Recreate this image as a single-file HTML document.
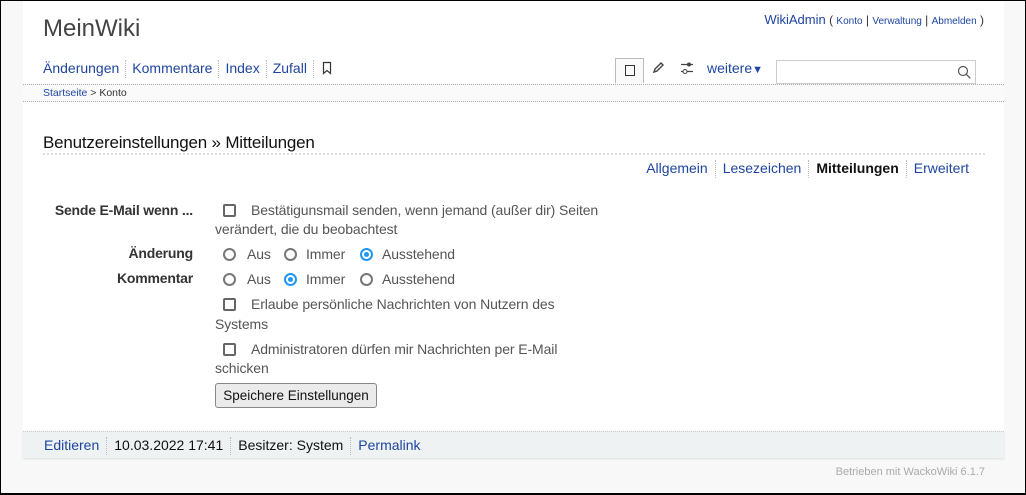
<!DOCTYPE html>
<html><head><meta charset="utf-8"><style>
*{margin:0;padding:0;box-sizing:border-box}
html,body{width:1026px;height:495px;overflow:hidden}
body{background:#f8f8f8;font-family:"Liberation Sans",sans-serif;position:relative;font-size:14px;color:#333}
.frame{position:absolute;left:0;top:0;width:1026px;height:495px;border:1px solid #000;border-bottom-width:2px;z-index:10;pointer-events:none}
.a{position:absolute;white-space:nowrap}
.b{color:#1e45a0}
.panel{position:absolute;left:23px;top:0;width:981px;height:431px;background:#fff}
.sep{display:inline-block;border-left:1px dotted #bbb;height:18px;vertical-align:middle;margin:0 6px}
.cb{position:absolute;width:13px;height:13px;border:2px solid #666;border-radius:2px}
.rd{position:absolute;width:13px;height:13px;border:2px solid #777;border-radius:50%}
.rd.on{border-color:#2196f3}
.rd.on::after{content:"";position:absolute;left:2px;top:2px;width:5px;height:5px;border-radius:50%;background:#2196f3}
.lbl{position:absolute;right:833px;font-weight:bold;color:#333;white-space:nowrap;letter-spacing:-0.2px}
.t{position:absolute;color:#555;white-space:nowrap;letter-spacing:-0.1px}
.n{font-size:14px}
.f .sep{margin:0 7px}
</style></head><body>
<div class="panel"></div>
<div class="a" style="left:43px;top:15px;font-size:24px;color:#444">MeinWiki</div>
<div class="a" style="right:42px;top:12px;font-size:12px;color:#333"><span class="b" style="font-size:13px">WikiAdmin</span> ( <span class="b" style="font-size:10px">Konto</span> | <span class="b" style="font-size:10px">Verwaltung</span> | <span class="b" style="font-size:10px">Abmelden</span> )</div>
<div class="a b n" style="left:43px;top:60px">Änderungen<span class="sep"></span>Kommentare<span class="sep"></span>Index<span class="sep"></span>Zufall<span class="sep"></span></div>
<svg class="a" style="left:322px;top:61px" width="10" height="14"><path d="M1.5 1.5h7v11l-3.5-3-3.5 3z" fill="none" stroke="#333" stroke-width="1.2"/></svg>
<div class="a" style="left:615px;top:58px;width:29px;height:25px;border:1px solid #bbb;border-bottom:none;background:#fafafa"></div>
<div class="a" style="left:625px;top:65px;width:10px;height:11px;border:1.5px solid #333"></div>
<svg class="a" style="left:651px;top:61px" width="14" height="14"><path d="M3 11l1-3 6-6 2 2-6 6z" fill="none" stroke="#444" stroke-width="1.4"/></svg>
<svg class="a" style="left:680px;top:61px" width="14" height="14"><path d="M1 3.5h12M1 10.5h12" stroke="#444" stroke-width="1.2"/><circle cx="9" cy="3.5" r="2" fill="#444"/><circle cx="5" cy="10.5" r="2" fill="#fff" stroke="#444"/></svg>
<div class="a b n" style="left:707px;top:60px">weitere<span style="font-size:11px">▼</span></div>
<div class="a" style="left:776px;top:60px;width:200px;height:24px;border:1px solid #ccc;background:#fff"></div>
<svg class="a" style="left:957px;top:65px" width="14" height="14"><circle cx="6" cy="6" r="4.5" fill="none" stroke="#555" stroke-width="1.2"/><path d="M9.3 9.3l4 4" stroke="#555" stroke-width="1.3"/></svg>
<div class="a" style="left:23px;top:84px;width:981px;height:18px;background:#fafafa;border-top:1px dotted #aaa;border-bottom:1px dotted #aaa"></div>
<div class="a" style="left:43px;top:87px;font-size:10.5px;color:#333"><span class="b">Startseite</span> &gt; Konto</div>
<div class="a" style="left:43px;top:133px;font-size:17px;color:#111;letter-spacing:-0.2px">Benutzereinstellungen » Mitteilungen</div>
<div class="a" style="left:43px;top:153px;width:942px;border-top:2px dotted #ddd"></div>
<div class="a n f" style="right:57px;top:160px"><span class="b">Allgemein</span><span class="sep"></span><span class="b">Lesezeichen</span><span class="sep"></span><b style="color:#111">Mitteilungen</b><span class="sep"></span><span class="b">Erweitert</span></div>

<div class="lbl" style="top:202px">Sende E-Mail wenn ...</div>
<div class="cb" style="left:223px;top:204px"></div>
<div class="t" style="left:251px;top:202px">Bestätigunsmail senden, wenn jemand (außer dir) Seiten</div>
<div class="t" style="left:215px;top:221px">verändert, die du beobachtest</div>
<div class="lbl" style="top:245px">Änderung</div>
<div class="rd" style="left:223px;top:248px"></div><div class="t" style="left:247px;top:246px">Aus</div>
<div class="rd" style="left:284px;top:248px"></div><div class="t" style="left:306px;top:246px">Immer</div>
<div class="rd on" style="left:360px;top:248px"></div><div class="t" style="left:382px;top:246px">Ausstehend</div>
<div class="lbl" style="top:270px">Kommentar</div>
<div class="rd" style="left:223px;top:273px"></div><div class="t" style="left:247px;top:271px">Aus</div>
<div class="rd on" style="left:284px;top:273px"></div><div class="t" style="left:306px;top:271px">Immer</div>
<div class="rd" style="left:360px;top:273px"></div><div class="t" style="left:382px;top:271px">Ausstehend</div>
<div class="cb" style="left:223px;top:298px"></div>
<div class="t" style="left:251px;top:296px">Erlaube persönliche Nachrichten von Nutzern des</div>
<div class="t" style="left:215px;top:316px">Systems</div>
<div class="cb" style="left:223px;top:343px"></div>
<div class="t" style="left:251px;top:341px">Administratoren dürfen mir Nachrichten per E-Mail</div>
<div class="t" style="left:215px;top:360px">schicken</div>
<div class="a" style="left:215px;top:383px;width:162px;height:25px;border:1px solid #888;border-radius:3px;background:#ebebeb;font-size:13.5px;color:#111;text-align:center;line-height:23px">Speichere Einstellungen</div>

<div class="a" style="left:23px;top:431px;width:981px;height:27px;background:#eef2f3;border-top:1px dotted #ccc;box-shadow:0 1px 2px #ddd"></div>
<div class="a n f" style="left:44px;top:437px;color:#111;font-size:14px"><span class="b">Editieren</span><span class="sep"></span>10.03.2022 17:41<span class="sep"></span>Besitzer: System<span class="sep"></span><span class="b">Permalink</span></div>
<div class="a" style="right:41px;top:466px;font-size:11px;color:#aaa">Betrieben mit WackoWiki 6.1.7</div>
<div class="frame"></div>
</body></html>
